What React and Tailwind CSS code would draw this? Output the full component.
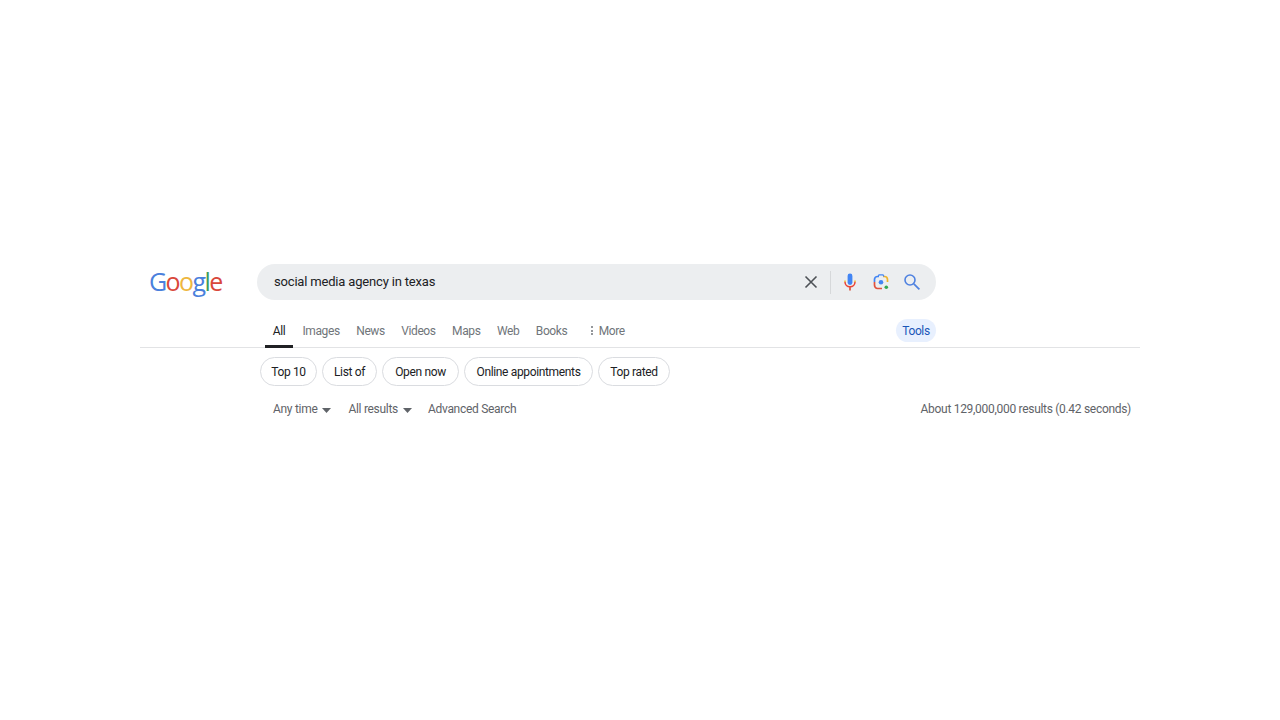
const TABS = ["Images", "News", "Videos", "Maps", "Web", "Books"];
const CHIPS = [
  { label: "Top 10", width: "w-[57px]" },
  { label: "List of", width: "w-[55px]" },
  { label: "Open now", width: "w-[77px]" },
  { label: "Online appointments", width: "w-[129px]" },
  { label: "Top rated", width: "w-[72px]" },
];

function Caret() {
  return (
    <svg width="9" height="5" viewBox="0 0 9 5" className="ml-[5px] mt-[2px]">
      <path d="M0 0h9L4.5 5z" fill="#5f6368" />
    </svg>
  );
}

function SearchIcons() {
  return (
    <div className="flex items-center">
      <svg width="24" height="24" viewBox="0 0 24 24" className="mr-[7px]">
        <path d="M6.5 6.5l11 11M17.5 6.5l-11 11" stroke="#4d5156" strokeWidth="1.6" fill="none" />
      </svg>
      <div className="h-[23px] w-px bg-[#d6d8da]" />
      <svg width="24" height="24" viewBox="0 0 24 24" className="ml-[7px]">
        <rect x="9.6" y="3.5" width="4.8" height="11.5" rx="2.4" fill="#4285f4" />
        <path d="M7 12c0 2.8 2.2 4.7 5 4.7" stroke="#ea4335" strokeWidth="1.5" fill="none" />
        <path d="M17 12c0 2.8-2.2 4.7-5 4.7" stroke="#ea4335" strokeWidth="1.5" fill="none" />
        <path d="M12 16.7v3.8" stroke="#d9543f" strokeWidth="1.7" fill="none" />
        <path d="M7 10.5v1.5M17 10.5v1.5" stroke="#f0b429" strokeWidth="1.5" fill="none" />
      </svg>
      <svg width="24" height="24" viewBox="0 0 24 24" className="ml-[7px]">
        <path d="M5.5 12V9.5C5.5 7.8 6.8 6.5 8.5 6.5H10" stroke="#4285f4" strokeWidth="1.7" fill="none" />
        <path d="M14 6.5h1.5c1.7 0 3 1.3 3 3V12" stroke="#f0b429" strokeWidth="1.7" fill="none" />
        <path d="M5.5 12v3c0 1.9 1.3 3.5 3 3.5H13" stroke="#e0533f" strokeWidth="1.7" fill="none" />
        <path d="M9 6.5l1-1.6h4l1 1.6" stroke="#4285f4" strokeWidth="1.2" fill="none" />
        <circle cx="12" cy="12.3" r="2.3" fill="#4285f4" />
        <circle cx="17.3" cy="17.3" r="1.8" fill="#34a853" />
      </svg>
      <svg width="24" height="24" viewBox="0 0 24 24" className="ml-[7px]">
        <circle cx="10" cy="10" r="5" stroke="#4f82e0" strokeWidth="1.6" fill="none" />
        <path d="M13.8 13.8l5.6 5.6" stroke="#4f82e0" strokeWidth="1.7" fill="none" />
      </svg>
    </div>
  );
}

export default function App() {
  return (
    <div className="min-h-screen bg-white font-['Roboto',sans-serif] text-[12px] tracking-[-0.3px]">
      <div className="mx-auto w-[1000px] pt-[264px]">
        {/* Logo and search bar */}
        <div className="flex items-center">
          <div className="flex h-9 w-[117px] items-center pl-[9px] font-['Open_Sans',sans-serif] text-[25px] font-medium tracking-[-1.6px]">
            <span className="text-[#4a80dc]">G</span>
            <span className="text-[#d9483b]">o</span>
            <span className="text-[#eeb73f]">o</span>
            <span className="text-[#4a80dc]">g</span>
            <span className="text-[#3f9c5a]">l</span>
            <span className="text-[#d9483b]">e</span>
          </div>
          <div className="flex h-9 w-[679px] items-center justify-between rounded-full bg-[#eceef0] pl-[17px] pr-3">
            <span className="mt-[-1px] text-[13px] tracking-[-0.18px] text-[#202124]">social media agency in texas</span>
            <SearchIcons />
          </div>
        </div>

        {/* Tabs */}
        <div className="relative mt-[19px] flex h-[29px] w-full border-b border-[#e2e3e5] tracking-[-0.4px]">
          <div className="ml-[125px] flex h-[29px] w-[28px] justify-center border-b-[3px] border-[#202124] pt-[3px] text-[#202124]">
            All
          </div>
          <div className="ml-[9.5px] flex gap-[16.5px] pt-[3px] text-[#70757a]">
            {TABS.map((t) => (
              <span key={t}>{t}</span>
            ))}
            <span className="ml-[7px] flex gap-[6px]">
              <span className="flex flex-col gap-[1.5px] pt-[4px]">
                <i className="size-[2px] rounded-full bg-[#70757a]" />
                <i className="size-[2px] rounded-full bg-[#70757a]" />
                <i className="size-[2px] rounded-full bg-[#70757a]" />
              </span>
              More
            </span>
          </div>
          <div className="absolute left-[756px] top-0 flex h-[23px] w-10 items-center justify-center rounded-full bg-[#e8f0fe] text-[#1a56b8]">
            Tools
          </div>
        </div>

        {/* Chips */}
        <div className="ml-[120px] mt-[9px] flex gap-[5px]">
          {CHIPS.map((c) => (
            <span
              key={c.label}
              className={`flex h-[29px] items-center justify-center rounded-full border border-[#dadce0] tracking-[-0.35px] text-[#202124] ${c.width}`}
            >
              {c.label}
            </span>
          ))}
        </div>

        {/* Filters and result count */}
        <div className="mt-[14px] flex items-center text-[#5f6368]">
          <span className="ml-[133px] flex items-center">
            Any time
            <Caret />
          </span>
          <span className="ml-[17px] flex items-center">
            All results
            <Caret />
          </span>
          <span className="ml-[16px]">Advanced Search</span>
          <span className="ml-auto mr-[9px]">About 129,000,000 results (0.42 seconds)</span>
        </div>
      </div>
    </div>
  );
}
